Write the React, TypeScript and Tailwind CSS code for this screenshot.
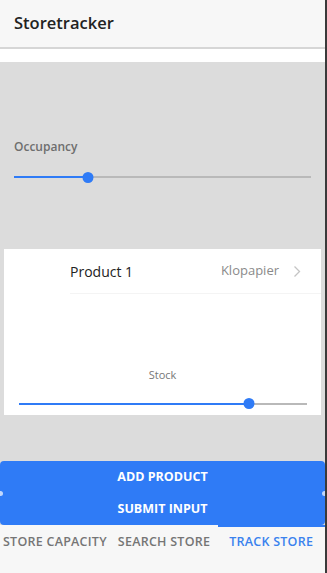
import React from "react";

const Slider = ({ value, className }: { value: number; className: string }) => {
  return (
    <div className={`relative h-[10px] flex items-center ${className}`}>
      <div className="w-full h-[2px] bg-[#b9b9b9]" />
      <div
        className="absolute left-0 h-[2px] bg-[#2f7bf6]"
        style={{ width: `${value}%` }}
      />
      <div
        className="absolute w-[11px] h-[11px] rounded-full bg-[#2f7bf6] -translate-x-1/2"
        style={{ left: `${value}%` }}
      />
    </div>
  );
};

const App = () => {
  return (
    <div
      className="w-[327px] h-[573px] flex overflow-hidden bg-[#f7f7f7]"
      style={{ fontFamily: '"Open Sans", "Noto Sans", sans-serif' }}
    >
      <div className="w-[325px] h-full flex flex-col">
        <div className="h-[49px] bg-[#f7f7f7] flex items-center px-[14px] border-b-2 border-[#d6d6d6] shadow-sm">
          <span className="text-[16.5px] font-semibold text-[#222]">Storetracker</span>
        </div>
        <div className="h-[13px] bg-white" />
        <div className="flex-1 bg-[#dcdcdc] flex flex-col">
          <div className="pt-[76px] px-[14px]">
            <div className="text-[12px] font-semibold text-[#6e6e6e]">Occupancy</div>
            <Slider value={25} className="mt-[16px] w-[297px]" />
          </div>
          <div className="mt-[67px] mx-[4px] bg-white h-[166px] flex flex-col">
            <div className="flex items-center h-[44px] pl-[66px] pr-[20px]">
              <span className="text-[14px] text-[#222] flex-1">Product 1</span>
              <span className="text-[13px] text-[#8a8a8a] mr-[14px]">Klopapier</span>
              <svg width="8" height="13" viewBox="0 0 8 13" fill="none">
                <path d="M1.5 1.5 L6.5 6.5 L1.5 11.5" stroke="#c4c4c4" strokeWidth="1.3" />
              </svg>
            </div>
            <div className="ml-[66px] h-px bg-[#f4f4f4]" />
            <div className="mt-[73px] text-center text-[11px] text-[#777]">Stock</div>
            <Slider value={80} className="mt-[15px] ml-[15px] w-[288px]" />
          </div>
          <div className="flex-1" />
          <div className="relative h-[64px] bg-[#2f7bf6] rounded-[4px] flex flex-col items-center text-white text-[12.5px] font-bold">
            <div className="h-[32px] flex items-center">ADD PRODUCT</div>
            <div className="h-[32px] flex items-center">SUBMIT INPUT</div>
            <div className="absolute left-0 top-[30px] w-[3px] h-[5px] bg-white/70 rounded-r-full" />
            <div className="absolute right-0 top-[30px] w-[3px] h-[5px] bg-white/70 rounded-l-full" />
          </div>
        </div>
        <div className="h-[48px] bg-[#f7f7f7] flex flex-col">
          <div className="h-[2px] flex">
            <div className="flex-1" />
            <div className="w-[107px] bg-[#2f7bf6]" />
          </div>
          <div className="flex items-center h-[31px] text-[12.5px] font-semibold tracking-[0.25px]">
            <span className="ml-[3px] text-[#757575]">STORE CAPACITY</span>
            <span className="ml-[11px] text-[#757575]">SEARCH STORE</span>
            <span className="ml-[19px] text-[#3a82ee]">TRACK STORE</span>
          </div>
        </div>
      </div>
      <div className="w-[2px] h-full bg-[#3a3a3a]" />
    </div>
  );
};

export default App;
